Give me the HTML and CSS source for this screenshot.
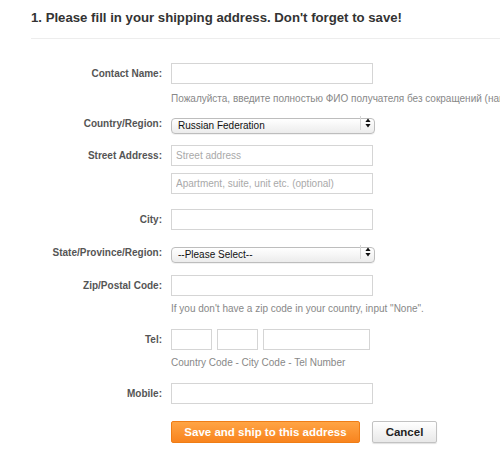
FILE: index.html
```html
<!DOCTYPE html>
<html>
<head>
<meta charset="utf-8">
<link rel="stylesheet" href="styles.css">
</head>
<body>
<div class="page">
  <h2 class="title">1. Please fill in your shipping address. Don't forget to save!</h2>
  <div class="form">
    <div class="row r-contact">
      <label class="lbl">Contact Name:</label>
      <div class="field"><input class="inp" type="text"></div>
    </div>
    <div class="row hint-row h-contact">
      <div class="lbl"></div>
      <div class="hint clip"><span class="nowrap">Пожалуйста, введите полностью ФИО получателя без сокращений (например: Иванов Иван Иванович)</span></div>
    </div>
    <div class="row r-country">
      <label class="lbl">Country/Region:</label>
      <div class="field">
        <div class="sel">
          <select><option>Russian Federation</option></select>
          <span class="arrows"><svg width="6" height="10" viewBox="0 0 6 10"><path d="M3 0.5 L5.6 4 H0.4 Z M3 9.5 L5.6 6 H0.4 Z" fill="#111"/></svg></span>
        </div>
      </div>
    </div>
    <div class="row r-street">
      <label class="lbl">Street Address:</label>
      <div class="field"><input class="inp" type="text" placeholder="Street address"></div>
    </div>
    <div class="row r-apt">
      <div class="lbl"></div>
      <div class="field"><input class="inp" type="text" placeholder="Apartment, suite, unit etc. (optional)"></div>
    </div>
    <div class="row r-city">
      <label class="lbl">City:</label>
      <div class="field"><input class="inp" type="text"></div>
    </div>
    <div class="row r-state">
      <label class="lbl">State/Province/Region:</label>
      <div class="field">
        <div class="sel">
          <select><option>--Please Select--</option></select>
          <span class="arrows"><svg width="6" height="10" viewBox="0 0 6 10"><path d="M3 0.5 L5.6 4 H0.4 Z M3 9.5 L5.6 6 H0.4 Z" fill="#111"/></svg></span>
        </div>
      </div>
    </div>
    <div class="row r-zip">
      <label class="lbl">Zip/Postal Code:</label>
      <div class="field"><input class="inp" type="text"></div>
    </div>
    <div class="row hint-row h-zip">
      <div class="lbl"></div>
      <div class="hint">If you don't have a zip code in your country, input "None".</div>
    </div>
    <div class="row r-tel">
      <label class="lbl">Tel:</label>
      <div class="field tel">
        <input class="inp tel-s" type="text">
        <input class="inp tel-s" type="text">
        <input class="inp tel-l" type="text">
      </div>
    </div>
    <div class="row hint-row h-tel">
      <div class="lbl"></div>
      <div class="hint">Country Code - City Code - Tel Number</div>
    </div>
    <div class="row r-mobile">
      <label class="lbl">Mobile:</label>
      <div class="field"><input class="inp" type="text"></div>
    </div>
    <div class="row r-buttons">
      <div class="lbl"></div>
      <div class="field buttons">
        <button class="btn btn-save" type="button">Save and ship to this address</button>
        <button class="btn btn-cancel" type="button">Cancel</button>
      </div>
    </div>
  </div>
</div>
</body>
</html>
```

FILE: styles.css
```css
html, body {
  margin: 0;
  padding: 0;
  background: #fff;
  overflow: hidden;
}
body {
  font-family: "Liberation Sans", Arial, Helvetica, sans-serif;
  color: #333;
  width: 500px;
  height: 460px;
}
.page {
  padding: 0 0 0 31px;
}
.title {
  margin: 0;
  padding: 10px 0 0 0;
  font-size: 13.2px;
  line-height: 16px;
  font-weight: bold;
  color: #333;
  height: 28px;
  border-bottom: 1px solid #ededed;
}
.form {
  padding-top: 24px;
}
.row {
  display: flex;
  align-items: center;
  gap: 9px;
}
.lbl {
  width: 131px;
  flex: none;
  text-align: right;
  font-size: 10px;
  font-weight: bold;
  color: #555;
}
.field {
  display: flex;
  align-items: center;
}
.inp {
  box-sizing: border-box;
  width: 202px;
  height: 21px;
  margin: 0;
  padding: 0 4px;
  border: 1px solid #d5d5d5;
  border-radius: 0;
  background: #fff;
  font-family: "Liberation Sans", Arial, sans-serif;
  font-size: 10px;
  color: #333;
  outline: none;
}
.inp::placeholder {
  color: #a9a9a9;
}
.hint {
  font-size: 10px;
  line-height: 14px;
  color: #888;
}
.clip {
  width: 329px;
  overflow: hidden;
}
.nowrap {
  white-space: nowrap;
}
.sel {
  position: relative;
  width: 204px;
  height: 16px;
}
.sel select {
  -webkit-appearance: none;
  appearance: none;
  box-sizing: border-box;
  width: 204px;
  height: 16px;
  margin: 0;
  padding: 0 0 0 6px;
  border: 1px solid #bdbdbd;
  border-radius: 4px;
  background: linear-gradient(#ffffff, #ececec);
  font-family: "Liberation Sans", Arial, sans-serif;
  font-size: 10px;
  line-height: 14px;
  color: #111;
  outline: none;
  box-shadow: 0 1px 0 rgba(0,0,0,0.05);
}
.arrows {
  position: absolute;
  right: 1px;
  top: 1px;
  width: 13px;
  height: 14px;
  border-left: 1px solid #d6d6d6;
  display: flex;
  align-items: center;
  justify-content: center;
  pointer-events: none;
}
.h-contact { margin-top: 8px; }
.r-country { margin-top: 9px; }
.r-street { margin-top: 14px; }
.r-apt { margin-top: 7px; }
.r-city { margin-top: 15px; }
.r-state { margin-top: 14px; }
.r-zip { margin-top: 15px; }
.h-zip { margin-top: 6px; }
.r-tel { margin-top: 13px; }
.h-tel { margin-top: 6px; }
.r-mobile { margin-top: 13px; }
.r-buttons { margin-top: 17px; }
.tel {
  gap: 5px;
}
.tel-s { width: 41px; }
.tel-l { width: 107px; }
.buttons {
  gap: 12px;
}
.btn {
  box-sizing: border-box;
  height: 22px;
  margin: 0;
  font-family: "Liberation Sans", Arial, sans-serif;
  font-size: 11.5px;
  font-weight: bold;
  border-radius: 2px;
  cursor: pointer;
  padding: 0;
}
.btn-save {
  width: 189px;
  color: #fff;
  border: 1px solid #ef7d16;
  background: linear-gradient(#ffa444, #f8841f);
}
.btn-cancel {
  width: 65px;
  color: #222;
  border: 1px solid #c2c2c2;
  background: linear-gradient(#ffffff, #e8e8e8);
  box-shadow: 0 1px 1px rgba(0,0,0,0.12);
}
```
